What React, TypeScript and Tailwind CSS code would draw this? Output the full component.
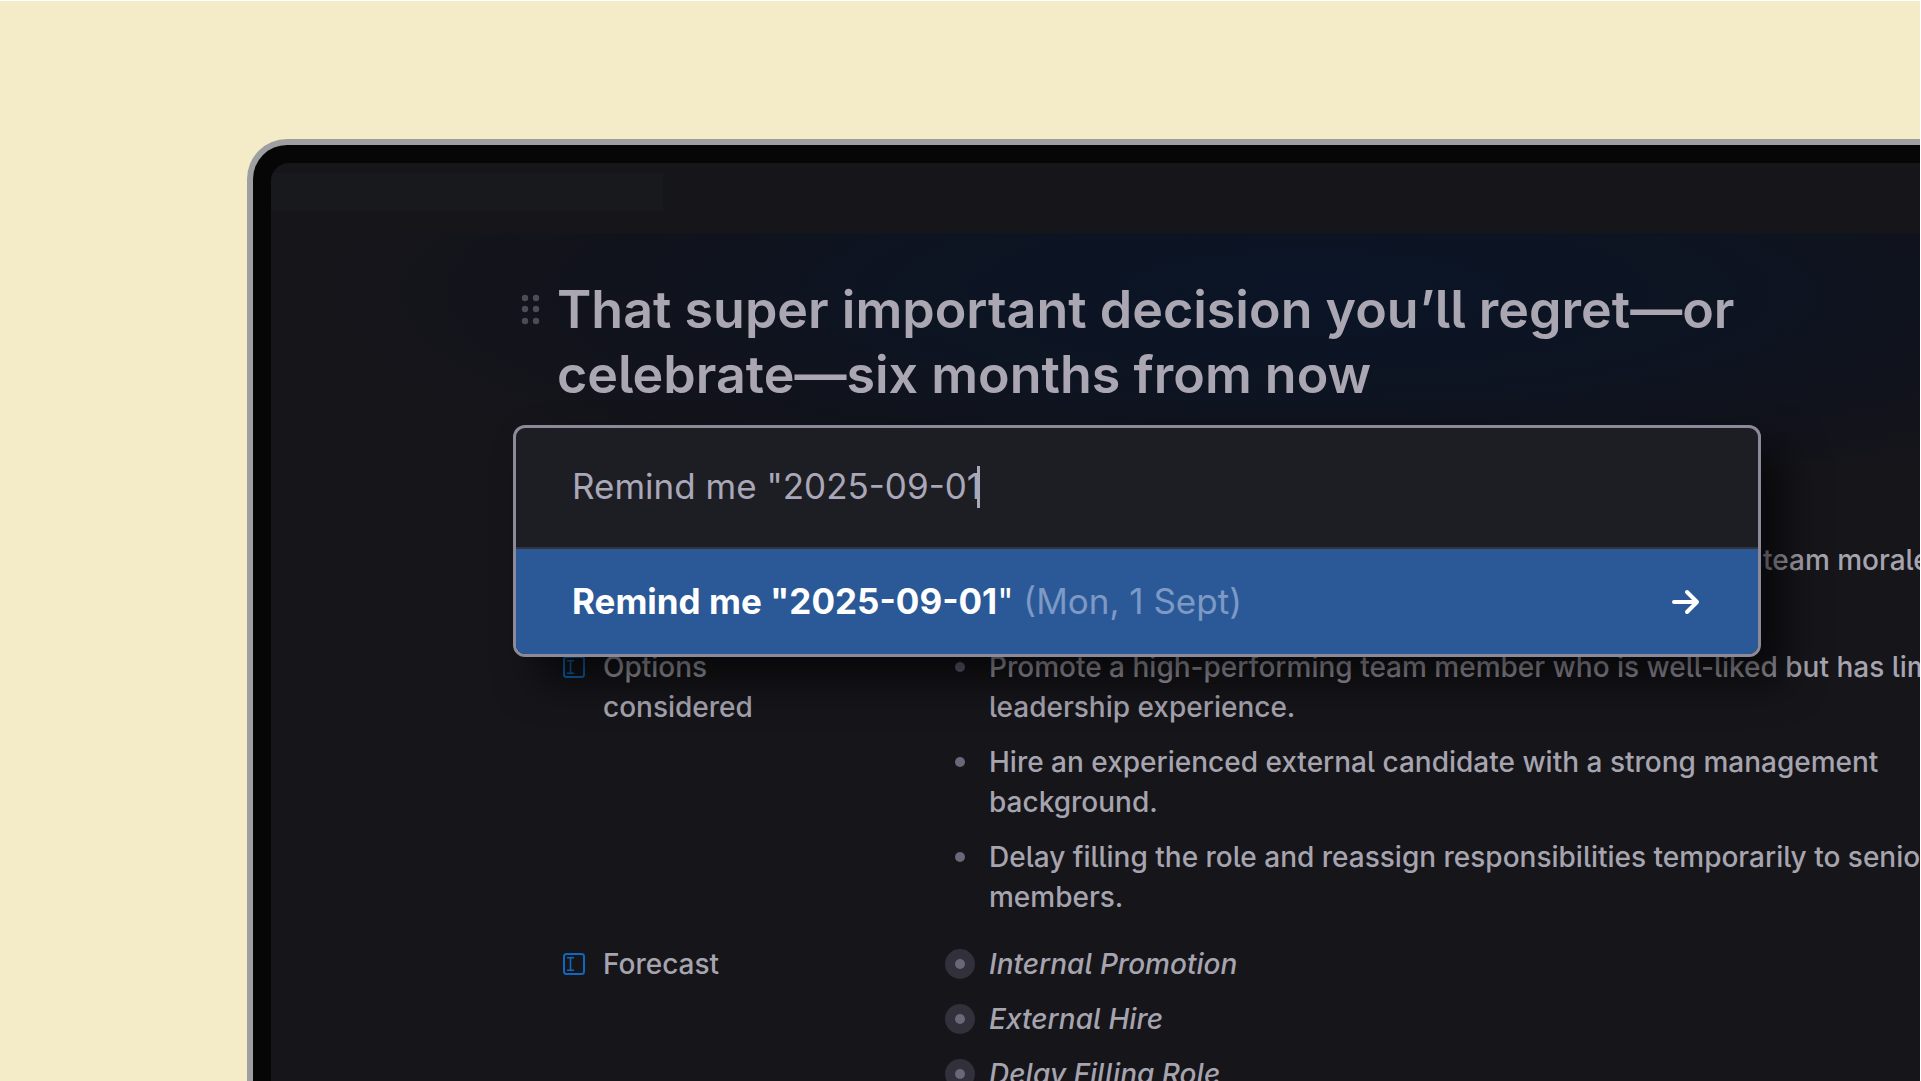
import React from "react";

const options = [
  ["Promote a high-performing team member who is well-liked but has limited", "leadership experience."],
  ["Hire an experienced external candidate with a strong management", "background."],
  ["Delay filling the role and reassign responsibilities temporarily to senior", "members."],
];

const forecasts = ["Internal Promotion", "External Hire", "Delay Filling Role"];

function DragHandle() {
  return (
    <svg viewBox="0 0 20 32" className="h-8 w-5 fill-[#4b4c55]" aria-hidden="true">
      {[4, 15].map((x) => [4, 15, 27].map((y) => <circle key={`${x}-${y}`} cx={x} cy={y} r="3.2" />))}
    </svg>
  );
}

function FieldIcon() {
  return (
    <svg viewBox="0 0 22 22" className="h-[22px] w-[22px] fill-none stroke-[#0f68bd]" strokeWidth="2" aria-hidden="true">
      <rect x="1" y="1" width="20" height="20" rx="2.5" />
      <path d="M7.5 5v12M4 4.8h7M4 17.2h7" strokeWidth="1.6" />
    </svg>
  );
}

function Field({ label, children }: { label: string; children: React.ReactNode }) {
  return (
    <section className="flex">
      <div className="flex w-[394px] shrink-0 gap-[18px] pl-0.5">
        <span className="flex h-10 items-center">
          <FieldIcon />
        </span>
        <h2 className="w-44 whitespace-normal">{label}</h2>
      </div>
      {children}
    </section>
  );
}

export default function App() {
  return (
    <div className="h-screen overflow-hidden border-t border-r border-white bg-[#f4ecc9] pt-[138px] pl-[247px] font-[Inter,sans-serif] [font-feature-settings:'cv05']">
      <div className="h-full rounded-tl-[40px] border-t-[6px] border-l-[6px] border-[#9e9fa0] bg-[#060606] pt-[18px] pl-[18px]">
        <main className="relative h-full overflow-hidden rounded-tl-[18px] bg-[#16151a] pt-2.5 text-[#a6a4af]">
          <div className="h-[38px] w-[392px] bg-[#18191d]" />
          <div className="mt-[22px] bg-[radial-gradient(ellipse_1020px_230px_at_1040px_60px,#0b1527,#0d1422_40%,#11131c_70%,#16151a)] pt-11 pb-[55px]">
            <div className="flex gap-4 pl-[250px]">
              <span className="flex h-[66px] items-center">
                <DragHandle />
              </span>
              <h1 className="text-[52px] leading-[65px] font-semibold whitespace-nowrap text-[#aaa7b3]">
                That super important decision you’ll regret—or
                <br />
                celebrate—six months from now
              </h1>
            </div>
          </div>
          <div className="flex flex-col gap-[27px] pl-[290px] text-[28px] leading-10 font-medium whitespace-nowrap">
            <p className="mt-[78px] h-20 pl-[1202px]">team morale</p>
            <Field label="Options considered">
              <ul className="flex flex-col gap-[15px]">
                {options.map(([first, second]) => (
                  <li key={first} className="flex gap-6">
                    <span className="flex h-10 items-center">
                      <span className="size-2.5 rounded-full bg-[#6a6779]" />
                    </span>
                    <span>
                      {first}
                      <br />
                      {second}
                    </span>
                  </li>
                ))}
              </ul>
            </Field>
            <Field label="Forecast">
              <ul className="flex flex-col gap-[15px] italic [font-feature-settings:'cv05','cv11']">
                {forecasts.map((f) => (
                  <li key={f} className="flex gap-3.5">
                    <span className="-ml-2.5 flex h-10 items-center">
                      <span className="flex size-[30px] items-center justify-center rounded-full bg-[#31303b]">
                        <span className="size-2.5 rounded-full bg-[#6a6779]" />
                      </span>
                    </span>
                    {f}
                  </li>
                ))}
              </ul>
            </Field>
          </div>
          <div className="absolute top-[262px] left-[242px] w-[1248px] overflow-hidden rounded-xl border-3 border-[#8c8a98] bg-[#1d1e23] text-[35px] shadow-[24px_24px_40px_#000000a0]">
            <div className="flex h-[121px] items-center border-b-2 border-[#34353a] pb-0.5 pl-14">
              <input
                aria-label="Command"
                defaultValue={'Remind me "2025-09-01'}
                className="field-sizing-content text-[#aaa7b8] outline-none"
              />
              <span className="-ml-1 h-[42px] w-[3px] bg-[#aaa7b8]" />
            </div>
            <button className="flex h-[105px] w-full items-center justify-between bg-[#2b5998] pr-[58px] pl-14 text-left">
              <span>
                <b className="font-bold text-white">Remind me "2025-09-01</b>
                <span className="text-white">"</span> <span className="text-[#7d99c4]">(Mon, 1 Sept)</span>
              </span>
              <svg viewBox="0 0 28 26" className="h-[26px] w-7 fill-none stroke-white" strokeWidth="4" strokeLinecap="round" strokeLinejoin="round" aria-hidden="true">
                <path d="M2 13h23M15 3l10 10-10 10" />
              </svg>
            </button>
          </div>
        </main>
      </div>
    </div>
  );
}
